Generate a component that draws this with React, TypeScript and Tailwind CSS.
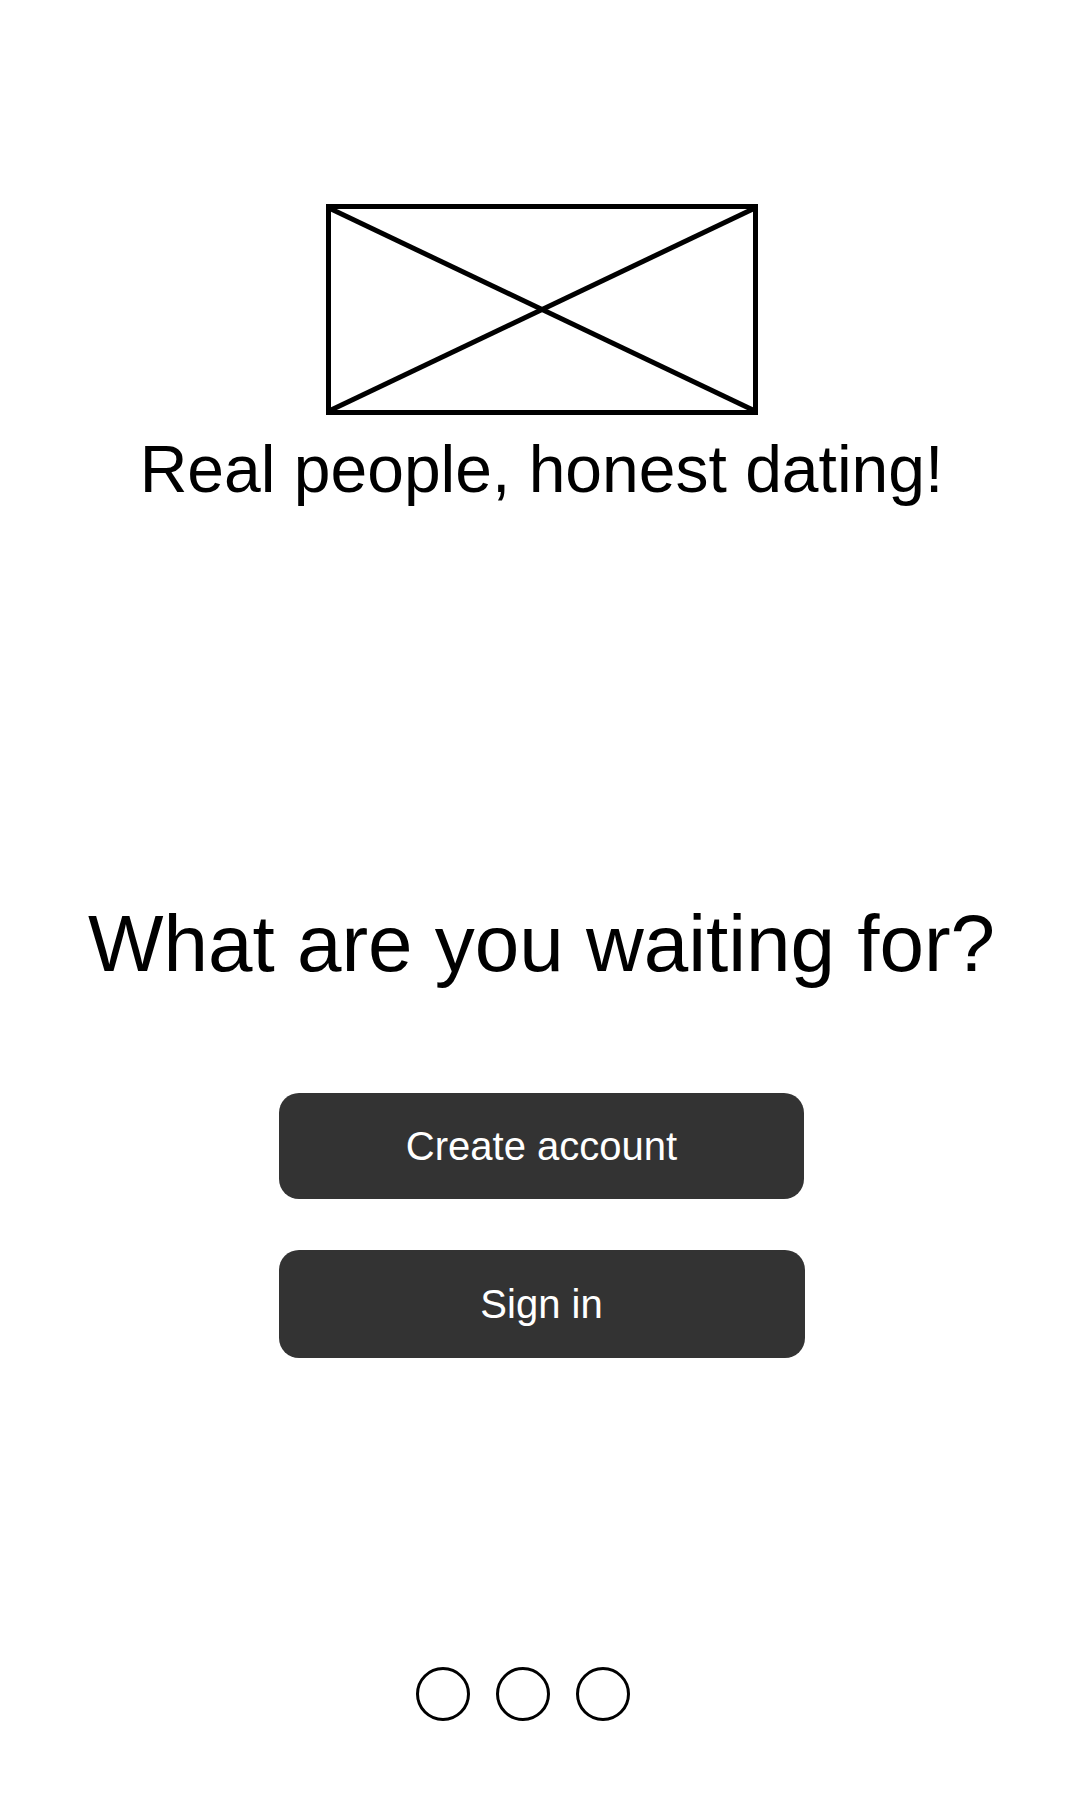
import React from "react";

function ImagePlaceholder() {
  return (
    <div className="relative h-[211px] w-[432px] border-[5px] border-black">
      <svg
        className="absolute inset-0 h-full w-full"
        viewBox="0 0 100 100"
        preserveAspectRatio="none"
      >
        <line x1="0" y1="0" x2="100" y2="100" stroke="black" strokeWidth="5" vectorEffect="non-scaling-stroke" />
        <line x1="100" y1="0" x2="0" y2="100" stroke="black" strokeWidth="5" vectorEffect="non-scaling-stroke" />
      </svg>
    </div>
  );
}

export default function App() {
  return (
    <div
      className="flex min-h-[1800px] w-full flex-col items-center bg-white pl-[3px] pt-[204px] text-black"
      style={{ fontFamily: '"Liberation Sans", Arial, sans-serif' }}
    >
      <ImagePlaceholder />
      <p className="mt-[16px] text-[66px] leading-[77px]">Real people, honest dating!</p>

      <h1 className="mt-[390px] text-[80px] leading-[92px]">What are you waiting for?</h1>

      <div className="mt-[103px] flex flex-col items-center">
        <button className="flex h-[106px] w-[525px] items-center justify-center rounded-[20px] bg-[#333333] text-[40px] text-white">
          Create account
        </button>
        <button className="mt-[51px] flex h-[108px] w-[526px] items-center justify-center rounded-[20px] bg-[#333333] text-[40px] text-white">
          Sign in
        </button>
      </div>

      <div className="mr-[38px] mt-[309px] flex gap-[26px]">
        <span className="h-[54px] w-[54px] rounded-full border-[3px] border-black" />
        <span className="h-[54px] w-[54px] rounded-full border-[3px] border-black" />
        <span className="h-[54px] w-[54px] rounded-full border-[3px] border-black" />
      </div>
    </div>
  );
}
